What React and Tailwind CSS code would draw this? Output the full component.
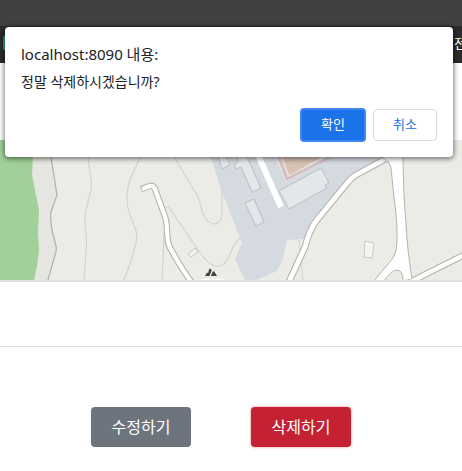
function MapView() {
  return (
    <svg
      viewBox="0 0 462 140"
      preserveAspectRatio="xMinYMid slice"
      className="block h-[140px] w-full bg-[#ebece6]"
      role="img"
      aria-label="지도"
    >
      {/* park and its edge */}
      <path d="M0 0H51V17L57 55L51 72Q50 78 52 90L56 106Q57 110 55 115L48 140H0Z" fill="#e5e6e1" />
      <path d="M0 0H33V17L32 35L39 70L38 92L39 110L37 126L34 140H0Z" fill="#a1d099" />
      <path d="M50 0L51 17L57 55L51 72Q50 78 52 90L56 106Q57 110 55 115L48 140" fill="none" stroke="#b3b4b1" strokeWidth="1.3" />

      {/* contour lines */}
      <g fill="none" stroke="#d2d3cd" strokeWidth="1.2">
        <path d="M87 10L91 40Q92 48 90 54L86 70Q84 80 86 94Q87 102 86 112L84 140" />
        <path d="M144 10L131 37Q124 56 129 72L136 91Q138 97 135 107Q132 119 124 140" />
        <path d="M170 10L198 57C201 63 201 71 204 76C212 90 222 83 222 74V52Q219 35 209 12" />
        <path d="M162 140L165 78V70Q167 64 171 70L198 110C215 134 224 128 230 114Q234 103 241 97" />
      </g>

      {/* campus ground */}
      <path d="M204 0L211 17L222 52L242 103L235 119L245 140H256L277 131L283 118L287 100L307 99L315 82L354 38L385 18V0Z" fill="#d4dae0" />
      <g fill="#e3e7ea" stroke="#b9bfc4">
        <path d="M216 10L222 29L230 25L223 10Z" />
        <path d="M236 10L238 22L234 25L236 29L241 27L252 52L261 48L244 10Z" />
        <path d="M245 63L254 59L264 82L256 86Z" />
        <path d="M279 51L289 69L327 48L325 45L329 43L321 28Z" />
      </g>
      <path d="M258 15L281 67" stroke="#fff" strokeWidth="6" />
      <path d="M275 10L287 39L340 10" fill="#d7c1b3" stroke="#ece4e2" strokeWidth="5" />
      <path d="M276 10L287 39L340 12" fill="none" stroke="#d0c0c4" strokeWidth="3" />
      <path d="M279 10L289 36L332 12" fill="#d7c1b3" stroke="#ede3df" />
      <path d="M299 100L303 140" stroke="#d0d1cb" />

      {/* roads: grey casing below, white surface above */}
      <g fill="none" stroke="#b3b4b0">
        <path strokeWidth="6.4" d="M141 49L150 46Q153 45 155 49L163 71Q167 80 167 91L168 102Q169 107 173 113Q180 126 192 143" />
        <path strokeWidth="7" d="M288 144L305 107Q309 91 316 81L348 42Q351 38 356 35L389 17" />
        <path strokeWidth="6.6" d="M408 143Q413 141 426 134L466 114" />
      </g>
      <path d="M380 15Q389 19 391 28L394 58Q397 78 397 92V102Q397 112 393 118L374 141H384Q392 130 397 130Q403 130 403 141L412 139Q407 108 406 83Q403 52 403 10Z" fill="#fff" stroke="#b3b4b0" />
      <g fill="none" stroke="#fff">
        <path strokeWidth="4.2" d="M142 49L150 46Q153 45 155 49L163 71Q167 80 167 91L168 102Q169 107 173 113Q180 126 192 143" />
        <path strokeWidth="4.8" d="M288 144L305 107Q309 91 316 81L348 42Q351 38 356 35L389 17" />
        <path strokeWidth="4.4" d="M408 143Q413 141 426 134L466 114" />
      </g>
      <path d="M382 17L387 22" stroke="#c8c9c4" />

      {/* small houses and the hill marker */}
      <path d="M365 101L374 103L372 118L364 117Z" fill="#f4f4f2" stroke="#cacbc6" />
      <path d="M188 114L195 108L198 112L191 117Z" fill="#f2f2ee" stroke="#c9cac4" />
      <path d="M205 136L207 132.500L208 133L209.500 128.500L211.500 129.500V131L209.500 136Z" fill="#444" />
      <path d="M211 136L212.300 132.500L214 131L217 136Z" fill="#444" />
      <path d="M198 140Q212 137 227 140Z" fill="#fff" />
    </svg>
  );
}

export default function App() {
  return (
    <div className="relative overflow-hidden bg-white font-['Noto_Sans','Noto_Sans_CJK_KR',sans-serif]">
      <div className="h-[26px] bg-[#404040]" />
      <nav className="flex h-[37px] items-center justify-between overflow-hidden bg-[#2b2b2b] pb-1 pl-[3px]">
        <span className="h-4 w-4 rounded-sm bg-[#20a884]" />
        <a href="#all" className="-mr-1 text-[13px] leading-5 text-white">전</a>
      </nav>

      <main className="pt-[77px]">
        <div className="border-b-2 border-[#dfdfe2]">
          <MapView />
        </div>
        <hr className="mt-16 border-[#dedede]" />
        <div className="flex gap-[60px] px-[91px] pt-[60px] pb-6">
          <button type="button" className="h-10 w-[100px] shrink-0 rounded bg-[#6c757d] text-base leading-5 text-white">
            수정하기
          </button>
          <button type="button" className="h-10 w-[100px] shrink-0 rounded bg-[#c42132] text-base leading-5 text-white shadow-[0_0_3px_#e58791]">
            삭제하기
          </button>
        </div>
      </main>

      <div
        role="dialog"
        aria-labelledby="confirm-title"
        className="absolute top-[27px] right-[9px] left-[5px] rounded bg-white px-4 py-[15px] shadow-[0_1px_5px_1px_rgba(0,0,0,0.5)]"
      >
        <h1 id="confirm-title" className="text-[15px] leading-6 text-[#202124]">localhost:8090 내용:</h1>
        <p className="mt-1 text-sm leading-6 text-[#202124]">정말 삭제하시겠습니까?</p>
        <div className="mt-3.5 flex items-center justify-end gap-[7px]">
          <button type="button" className="h-[34px] w-[66px] rounded border-2 border-[#4285f4] bg-[#1a73e8] text-[13px] text-white">
            확인
          </button>
          <button type="button" className="h-8 w-16 rounded border border-[#dadce0] bg-white text-[13px] text-[#1a73e8]">
            취소
          </button>
        </div>
      </div>
    </div>
  );
}
